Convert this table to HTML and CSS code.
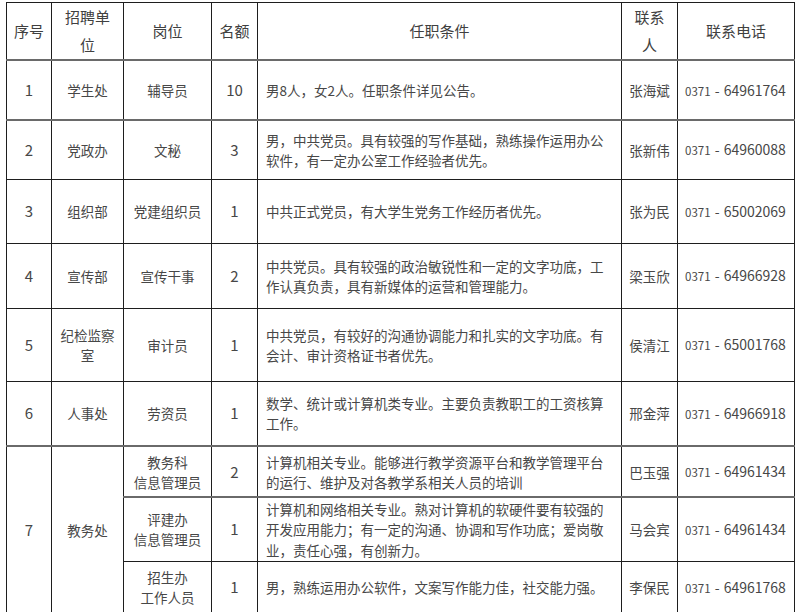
FILE: index.html
```html
<!DOCTYPE html>
<html lang="zh-CN">
<head>
<meta charset="utf-8">
<link rel="stylesheet" href="styles.css">
</head>
<body>
<table class="jobs">
  <colgroup>
    <col class="c1"><col class="c2"><col class="c3"><col class="c4"><col class="c5"><col class="c6"><col class="c7">
  </colgroup>
  <thead>
    <tr class="head gray">
      <th>序号</th><th>招聘单<br>位</th><th>岗位</th><th>名额</th><th>任职条件</th><th>联系<br>人</th><th>联系电话</th>
    </tr>
  </thead>
  <tbody>
    <tr class="r1 gray">
      <td class="num">1</td><td>学生处</td><td>辅导员</td><td class="num">10</td>
      <td class="req">男8人，女2人。任职条件详见公告。</td><td>张海斌</td><td class="tel"><span class="ac">0371</span> - 64961764</td>
    </tr>
    <tr class="r2">
      <td class="num">2</td><td>党政办</td><td>文秘</td><td class="num">3</td>
      <td class="req">男，中共党员。具有较强的写作基础，熟练操作运用办公<br>软件，有一定办公室工作经验者优先。</td><td>张新伟</td><td class="tel"><span class="ac">0371</span> - 64960088</td>
    </tr>
    <tr class="r3">
      <td class="num">3</td><td>组织部</td><td>党建组织员</td><td class="num">1</td>
      <td class="req">中共正式党员，有大学生党务工作经历者优先。</td><td>张为民</td><td class="tel"><span class="ac">0371</span> - 65002069</td>
    </tr>
    <tr class="r4">
      <td class="num">4</td><td>宣传部</td><td>宣传干事</td><td class="num">2</td>
      <td class="req">中共党员。具有较强的政治敏锐性和一定的文字功底，工<br>作认真负责，具有新媒体的运营和管理能力。</td><td>梁玉欣</td><td class="tel"><span class="ac">0371</span> - 64966928</td>
    </tr>
    <tr class="r5">
      <td class="num">5</td><td>纪检监察<br>室</td><td>审计员</td><td class="num">1</td>
      <td class="req">中共党员，有较好的沟通协调能力和扎实的文字功底。有<br>会计、审计资格证书者优先。</td><td>侯清江</td><td class="tel"><span class="ac">0371</span> - 65001768</td>
    </tr>
    <tr class="r6 gray">
      <td class="num">6</td><td>人事处</td><td>劳资员</td><td class="num">1</td>
      <td class="req">数学、统计或计算机类专业。主要负责教职工的工资核算<br>工作。</td><td>邢金萍</td><td class="tel"><span class="ac">0371</span> - 64966918</td>
    </tr>
    <tr class="r7a gray">
      <td class="num" rowspan="3">7</td><td rowspan="3">教务处</td><td>教务科<br>信息管理员</td><td class="num">2</td>
      <td class="req">计算机相关专业。能够进行教学资源平台和教学管理平台<br>的运行、维护及对各教学系相关人员的培训</td><td>巴玉强</td><td class="tel"><span class="ac">0371</span> - 64961434</td>
    </tr>
    <tr class="r7b">
      <td>评建办<br>信息管理员</td><td class="num">1</td>
      <td class="req">计算机和网络相关专业。熟对计算机的软硬件要有较强的<br>开发应用能力；有一定的沟通、协调和写作功底；爱岗敬<br>业，责任心强，有创新力。</td><td>马会宾</td><td class="tel"><span class="ac">0371</span> - 64961434</td>
    </tr>
    <tr class="r7c">
      <td>招生办<br>工作人员</td><td class="num">1</td>
      <td class="req">男，熟练运用办公软件，文案写作能力佳，社交能力强。</td><td>李保民</td><td class="tel"><span class="ac">0371</span> - 64961768</td>
    </tr>
  </tbody>
</table>
</body>
</html>
```
FILE: styles.css
```css
html, body {
  margin: 0;
  padding: 0;
  background: #ffffff;
}
body {
  font-family: "Noto Sans CJK SC", "Noto Sans", sans-serif;
  color: #474747;
}
.jobs {
  margin: 2px 0 0 6px;
  width: 788px;
  table-layout: fixed;
  border-collapse: collapse;
}
.c1 { width: 45px; }
.c2 { width: 72px; }
.c3 { width: 88px; }
.c4 { width: 46px; }
.c5 { width: 364px; }
.c6 { width: 56px; }
.c7 { width: 117px; }

.jobs th, .jobs td {
  border: 1px solid #1e1e1e;
  padding: 0 2px;
  text-align: center;
  vertical-align: middle;
  overflow: hidden;
  white-space: nowrap;
}
.jobs th {
  font-weight: normal;
  font-size: 15px;
  line-height: 28px;
  color: #404040;
}
.jobs td {
  font-size: 13.5px;
  line-height: 20px;
}
.jobs td.num {
  font-size: 15px;
}
.jobs td.req {
  text-align: left;
  padding: 0 8px;
}
.jobs td.tel {
  font-size: 14px;
  text-align: left;
  padding-left: 7px;
  word-spacing: 1px;
}
.ac {
  font-size: 11.5px;
}
.jobs tr.gray > th, .jobs tr.gray > td {
  border-bottom: 2px solid #6a6a6a;
}
.r7a > td[rowspan] {
  border-bottom: 1px solid #1e1e1e !important;
}
.head { height: 57px; }
.r1 { height: 60px; }
.r2 { height: 59px; }
.r3 { height: 64px; }
.r4 { height: 65px; }
.r5 { height: 73px; }
.r6 { height: 65px; }
.r7a { height: 51px; }
.r7b { height: 64px; }
.r7c { height: 52px; }
.r7b td.req { line-height: 20.5px; }
```
